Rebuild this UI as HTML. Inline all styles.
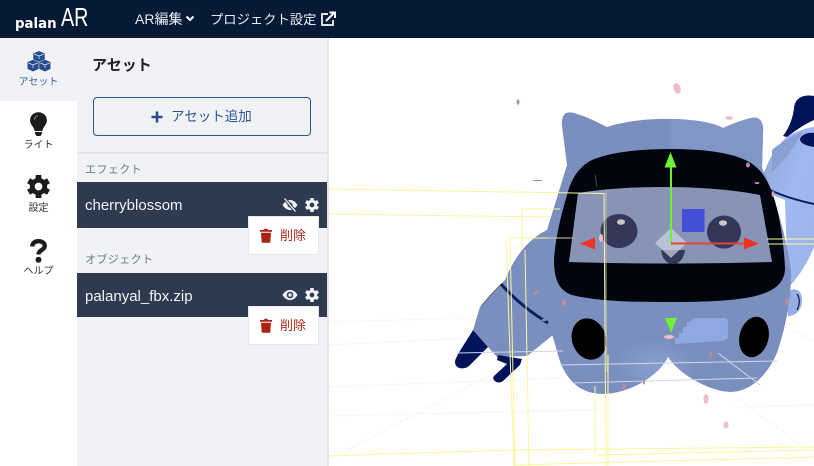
<!DOCTYPE html>
<html lang="ja"><head><meta charset="utf-8"><style>
*{box-sizing:border-box;margin:0;padding:0}
html,body{width:814px;height:466px;overflow:hidden;background:#fff;font-family:"Liberation Sans","Noto Sans CJK JP",sans-serif}
.a{position:absolute;white-space:nowrap}
.hd{left:0;top:0;width:814px;height:38px;background:#061a36}
.lb{left:0;width:77px;text-align:center;font-size:10px;line-height:12px;color:#333}
.row{left:77px;width:250px;background:#2d3a50}
.pop{left:248px;width:71px;height:39px;background:#fff;border:1px solid #e8e9ec;color:#b02a1e;font-size:13px;line-height:38px;padding-left:31px}
.sec{left:85px;font-size:11px;line-height:14px;color:#74787f;letter-spacing:.4px}
.nm{left:85px;font-size:15px;line-height:18px;color:#f2f4f7}
</style></head><body>
<svg class="a" style="left:328px;top:38px" width="486" height="428" viewBox="328 38 486 428">
<defs>
<radialGradient id="gl" cx="50%" cy="50%" r="50%"><stop offset="0" stop-color="#9cb6ee" stop-opacity=".4"/><stop offset="1" stop-color="#9cb6ee" stop-opacity="0"/></radialGradient>
<linearGradient id="rc" x1="0" y1="0" x2="1" y2="1"><stop offset="0" stop-color="#8ea4d8"/><stop offset=".5" stop-color="#a0b9ef"/><stop offset="1" stop-color="#9ab3ea"/></linearGradient>
</defs>
<g stroke="#f5f6f7" stroke-width="1" fill="none">
<path d="M328 322 L470 318M328 345 L470 338M328 387 L560 378M328 416 L814 405M328 460 L500 370M730 392 L814 455M790 330 L814 340"/>
</g>
<!-- right cat -->
<path d="M760 190 C763 170 772 150 787 137 C797 131 806 128 814 127 L814 247 C808 262 798 278 788 288 L785 200Z" fill="url(#rc)"/>
<path d="M772 150 C782 141 795 135 803 132 L786 158 L772 172Z" fill="#8a9fd4"/>
<path d="M783 136 C789 128 793 118 794 108 C795 98 803 94 814 96 L814 120 C805 124 796 130 787 137Z" fill="#03135a"/>
<path d="M800 139 C801 135 808 132 814 133 L814 147 C808 146 800 144 800 139Z" fill="#03135a"/>
<path d="M770 190 C785 197 800 201 814 204" stroke="#0b1d63" stroke-width="2" fill="none"/>
<path d="M786 292 C796 286 802 291 802 300 C802 310 796 316 788 316Z" fill="#97aee4"/>
<path d="M797 294 C800 298 800 304 797 310" stroke="#0b1d63" stroke-width="1.300" fill="none"/>
<!-- arm -->
<path d="M547 230 C530 238 515 255 505 280 L490 295 L480 307 L473 330 L497 357 L527 356 L553 335 L570 260Z" fill="#7b8fbe"/>
<path d="M501 284 C515 300 530 312 548 323" stroke="#0b1d63" stroke-width="3" fill="none"/>
<path d="M501 284 L481 306" stroke="#555" stroke-width=".7" fill="none"/>
<path d="M473 330 L488 347 L469 366 C464 370 455 369 455 362 C455 357 466 342 473 330Z" fill="#03135a"/>
<path d="M498 355 L522 359 L520 365 L503 381 C498 385 491 380 494 376 L507 364 L497 360Z" fill="#03135a"/>
<!-- head/body -->
<path d="M562 126 C561 114 566 111 574 113 C585 116 597 122 607 127 C640 116 695 116 723 128 C732 124 742 120 751 118 C760 116 764 122 763 134 L762 168 C778 205 788 245 791 272 C791 300 786 325 778 350 C770 372 752 392 730 392 C712 392 680 376 668 357 C660 375 630 394 603 394 C580 394 565 380 558 355 C554 340 552 335 548 320 L540 240 L547 230 L567 165Z" fill="#7b8fbe"/>
<path d="M670 119 C695 119 715 123 723 128 C732 124 742 120 751 118 C760 116 764 122 763 134 L762 168 C775 200 785 235 791 272 L670 150Z" fill="#8196c6"/>
<ellipse cx="655" cy="365" rx="42" ry="26" fill="url(#gl)"/>
<path d="M668 357 C660 375 630 394 603 394 L603 420 H735 L730 392 C712 392 680 376 668 357Z" fill="#fff"/>
<!-- visor -->
<path d="M670 149 C640 149 610 152 592 160 C578 167 571 180 567 195 C561 215 555 240 554 260 C554 278 558 290 572 295 C600 302 640 302 670 302 C705 302 745 301 765 293 C778 288 785 280 785 268 C784 245 780 215 773 195 C767 177 758 165 743 159 C725 151 695 149 670 149Z" fill="#01050e"/>
<path d="M578 193 C610 188 640 187 665 187 C700 187 735 190 760 195 L772 262 C710 264 630 264 569 262Z" fill="#8794b5"/>
<!-- eyes -->
<ellipse cx="619" cy="231" rx="18.500" ry="17" fill="#33375a"/>
<ellipse cx="621" cy="222" rx="4" ry="2.800" fill="#c9c9c3"/>
<ellipse cx="724" cy="232" rx="17" ry="16.500" fill="#33375a"/>
<ellipse cx="723" cy="223" rx="4" ry="2.800" fill="#c9c9c3"/>
<path d="M661 250 H685 C684 259 679 264 673 264 C667 264 662 259 661 250Z" fill="#33375a"/>
<path d="M662 250 L679 250 L671 258Z" fill="#5f6a8c"/>
<!-- nose patch & ovals -->
<path d="M675 344 V338 H679 V333 H683 V327 H687 V322 H690 C692 319 695 318 698 318 H724 C727 318 728 320 728 323 V335 C728 339 726 340 722 341Z" fill="#8ea8e2"/>
<ellipse cx="589" cy="339" rx="17" ry="21" transform="rotate(-18 589 339)" fill="#000"/>
<ellipse cx="754" cy="337" rx="14.500" ry="20.500" transform="rotate(14 754 337)" fill="#000"/>
<!-- yellow boxes -->
<g fill="none" stroke="#faf79c" stroke-width="1">
<path d="M328 189 L604 193.500 L606 466"/>
<path d="M328 214 L550 217 M522 209 V250 M522 209 H560"/>
<path d="M508 238 H570 M510 238 L515 466 M506 240 L514 466"/>
<path d="M328 456 L513 450 L814 447 M515 465 L814 457 M595 386 V455 L814 450"/>
<path d="M525 250 L529 466 M608 355 V466"/>
<path d="M767 239 H814M768 244 H814"/>
</g>
<g stroke="#c8cbb0" stroke-width="1" fill="none" opacity=".8">
<path d="M606 190 V300M606 300 L607 372"/>
<path d="M548 238 H575"/>
</g>
<g stroke="#cfd6e6" stroke-width="1" fill="none">
<path d="M560 365 L777 361 M573 383 L757 378 M718 353 L760 385 M457 353 L563 351"/>
</g>
<!-- petals -->
<g fill="#f0bcc9">
<ellipse cx="677" cy="88.500" rx="3.500" ry="5.500" transform="rotate(-15 677 88)"/>
<ellipse cx="729" cy="118" rx="4" ry="1.800"/>
<ellipse cx="706" cy="399" rx="2.500" ry="5"/>
<ellipse cx="726" cy="425" rx="2.500" ry="3.500"/>
<ellipse cx="669" cy="337" rx="5" ry="2"/>
<ellipse cx="601" cy="238" rx="2" ry="4"/>
</g>
<g fill="#c08a9c">
<ellipse cx="518" cy="102" rx="1.500" ry="2.800"/>
<ellipse cx="624" cy="386" rx="1.500" ry="2.800"/>
<ellipse cx="564" cy="303" rx="2" ry="3.500"/>
<ellipse cx="536" cy="293" rx="3" ry="1.500" transform="rotate(-20 536 293)"/>
<ellipse cx="544" cy="320" rx="2.500" ry="1"/>
<ellipse cx="644" cy="382" rx="1" ry="2.500"/>
<ellipse cx="711" cy="354" rx="1" ry="2.500"/>
<ellipse cx="787" cy="302" rx="2" ry="3.500"/>
<ellipse cx="748" cy="165" rx="2" ry="2.500"/>
<ellipse cx="757" cy="183" rx="2.500" ry="1"/>
<ellipse cx="773" cy="194" rx="1.500" ry="3" fill="#d69aa4"/>
</g>
<path d="M533 180.500 H542" stroke="#b48a9a" stroke-width="1"/>
<path d="M595 175 L597 187" stroke="#555" stroke-width=".8"/>
<!-- gizmo -->
<path d="M671 228 L687 243 L671 258 L655 243Z" fill="#fff" fill-opacity=".42"/>
<path d="M671 243 V165" stroke="#6fef35" stroke-width="2"/>
<path d="M670.500 152 L676.500 167.500 H664.500Z" fill="#6df037"/>
<path d="M671 243.500 H745" stroke="#ea4038" stroke-width="2"/>
<path d="M759 243.500 L744 237.500 V249.500Z" fill="#ee3424"/>
<path d="M580 243.500 L595 237.500 V249.500Z" fill="#ee3424"/>
<rect x="682" y="209" width="22.500" height="23" fill="#444ed8"/>
<path d="M665 318 H677 L671 333Z" fill="#6df037"/>
</svg>

<div class="a" style="left:77px;top:38px;width:250px;height:428px;background:#f0f2f5"></div>
<div class="a" style="left:327px;top:38px;width:1.500px;height:428px;background:#e3e5e8"></div>
<div class="a" style="left:0;top:38px;width:77px;height:63px;background:#f0f2f5"></div>

<div class="a hd"></div>
<div class="a" style="left:15px;top:14px;font:bold 14.500px/20px 'DejaVu Sans',sans-serif;color:#fff;transform-origin:0 50%;transform:scaleX(.92)">palan</div>
<div class="a" style="left:61px;top:2px;font-size:26px;line-height:30px;color:#fff;transform-origin:0 50%;transform:scaleX(.76)">AR</div>
<div class="a" style="left:135px;top:10px;font-size:14px;line-height:19px;color:#e9edf3">AR編集</div>
<svg class="a" style="left:185px;top:15px" width="10" height="8" viewBox="0 0 10 8"><path d="M1.500 1.500 L5 5 L8.500 1.500" stroke="#fff" stroke-width="2" fill="none"/></svg>
<div class="a" style="left:210px;top:10px;font-size:13.300px;line-height:19px;color:#e9edf3">プロジェクト設定</div>
<svg class="a" style="left:320px;top:11px" width="17" height="16" viewBox="0 0 17 16"><path d="M8 3 H2 V14 H13 V9" stroke="#fff" stroke-width="1.700" fill="none"/><path d="M6 10 L14 2 M9.500 1.500 H15 V7" stroke="#fff" stroke-width="2" fill="none"/></svg>

<!-- rail -->
<svg class="a" style="left:27px;top:50px" width="24" height="22" viewBox="0 0 24 22">
<g fill="#264a90" stroke="#f0f2f5" stroke-width=".5">
<path d="M12 .8 L18 3.300 V10 L12 12.500 L6 10 V3.300Z"/>
<path d="M6 9.500 L12 12 V19 L6 21.700 L0.300 19 V12Z"/>
<path d="M18 9.500 L23.700 12 V19 L18 21.700 L12 19 V12Z"/>
</g>
<g stroke="#f0f2f5" stroke-width=".7" fill="none"><path d="M7 4 L12 6 L17 4M12 6 V9M1.500 13 L6 15 L10.500 13M6 15 V18M13.500 13 L18 15 L22.500 13M18 15 V18"/></g>
</svg>
<div class="a lb" style="top:75px;color:#3f62a3;transform:translateY(2px)">アセット</div>
<svg class="a" style="left:30px;top:112px" width="17" height="25" viewBox="0 0 17 25"><path d="M8.500 0.300 C3.500 0.300 0.100 3.800 0.100 8.300 C0.100 13 3.800 14.500 4.700 19 H12.300 C13.200 14.500 16.900 13 16.900 8.300 C16.900 3.800 13.500 .3 8.500 .3Z" fill="#1c1c1c"/><path d="M4.500 8 C4.500 5.500 6 4 8 4" stroke="#fff" stroke-width="1" fill="none" opacity=".5"/><path d="M5 20 H12 V21.500 L10.500 24 H6.500 L5 21.500Z" fill="#1c1c1c"/></svg>
<div class="a lb" style="top:140px">ライト</div>
<svg class="a" style="left:27px;top:175px" width="23" height="23" viewBox="-12 -12 24 24"><g fill="#1c1c1c"><path d="M-3 -12 H3 V-6 H-3Z"/><path d="M-3 -12 H3 V-6 H-3Z" transform="rotate(60)"/><path d="M-3 -12 H3 V-6 H-3Z" transform="rotate(120)"/><path d="M-3 -12 H3 V-6 H-3Z" transform="rotate(180)"/><path d="M-3 -12 H3 V-6 H-3Z" transform="rotate(240)"/><path d="M-3 -12 H3 V-6 H-3Z" transform="rotate(300)"/></g><circle r="6.500" fill="none" stroke="#1c1c1c" stroke-width="5"/></svg>
<div class="a lb" style="top:203px">設定</div>
<svg class="a" style="left:30px;top:239px" width="17" height="24" viewBox="0 0 17 24"><path d="M2.200 7.500 C2.500 3.800 5 2.200 8.500 2.200 C12 2.200 14.800 4 14.800 7 C14.800 11 8.500 11 8.500 15.500" stroke="#1c1c1c" stroke-width="4.300" fill="none"/><circle cx="8.500" cy="20.800" r="3" fill="#1c1c1c"/></svg>
<div class="a lb" style="top:266px">ヘルプ</div>

<!-- panel -->
<div class="a" style="left:92px;top:56px;font-size:15px;line-height:20px;font-weight:bold;color:#222">アセット</div>
<div class="a" style="left:93px;top:97px;width:218px;height:39px;border:1px solid #2f5596;border-radius:4px"></div>
<svg class="a" style="left:151px;top:110.500px" width="12" height="12" viewBox="0 0 12 12"><path d="M6 .5 V11.500M.5 6 H11.500" stroke="#2a4d8f" stroke-width="2.600"/></svg>
<div class="a" style="left:171px;top:107px;font-size:13.500px;line-height:19px;color:#2f5596">アセット追加</div>
<div class="a" style="left:77px;top:152px;width:250px;height:2px;background:#e3e5e8"></div>
<div class="a sec" style="top:163px">エフェクト</div>
<div class="a row" style="top:182px;height:46px"></div>
<div class="a nm" style="top:197px">cherryblossom</div>
<div class="a sec" style="top:253px">オブジェクト</div>
<div class="a row" style="top:273px;height:44px"></div>
<div class="a nm" style="top:288px">palanyal_fbx.zip</div>

<svg class="a" style="left:282px;top:197px" width="16" height="16" viewBox="0 0 16 16"><path d="M.5 8 C3 4.200 5.500 3 8 3 C10.500 3 13 4.200 15.500 8 C13 11.800 10.500 13 8 13 C5.500 13 3 11.800 .5 8Z" fill="#f2f4f7"/><circle cx="8" cy="8" r="2.500" fill="#2d3a50"/><path d="M2.500 1.500 L13.500 14.500" stroke="#2d3a50" stroke-width="3.200"/><path d="M2.500 1.500 L13.500 14.500" stroke="#f2f4f7" stroke-width="1.300"/></svg>
<svg class="a" style="left:305px;top:198px" width="14" height="14" viewBox="-12 -12 24 24"><g fill="#f2f4f7"><path d="M-3 -12 H3 V-6 H-3Z"/><path d="M-3 -12 H3 V-6 H-3Z" transform="rotate(60)"/><path d="M-3 -12 H3 V-6 H-3Z" transform="rotate(120)"/><path d="M-3 -12 H3 V-6 H-3Z" transform="rotate(180)"/><path d="M-3 -12 H3 V-6 H-3Z" transform="rotate(240)"/><path d="M-3 -12 H3 V-6 H-3Z" transform="rotate(300)"/></g><circle r="6.500" fill="none" stroke="#f2f4f7" stroke-width="5"/></svg>
<svg class="a" style="left:282px;top:288px" width="16" height="14" viewBox="0 0 16 14"><path d="M.5 7 C3 3 5.500 2 8 2 C10.500 2 13 3 15.500 7 C13 11 10.500 12 8 12 C5.500 12 3 11 .5 7Z" fill="#f2f4f7"/><circle cx="8" cy="7" r="3.300" fill="#2d3a50"/><circle cx="8" cy="7" r="1.700" fill="#f2f4f7"/></svg>
<svg class="a" style="left:305px;top:288px" width="14" height="14" viewBox="-12 -12 24 24"><g fill="#f2f4f7"><path d="M-3 -12 H3 V-6 H-3Z"/><path d="M-3 -12 H3 V-6 H-3Z" transform="rotate(60)"/><path d="M-3 -12 H3 V-6 H-3Z" transform="rotate(120)"/><path d="M-3 -12 H3 V-6 H-3Z" transform="rotate(180)"/><path d="M-3 -12 H3 V-6 H-3Z" transform="rotate(240)"/><path d="M-3 -12 H3 V-6 H-3Z" transform="rotate(300)"/></g><circle r="6.500" fill="none" stroke="#f2f4f7" stroke-width="5"/></svg>

<div class="a pop" style="top:216px">削除</div>
<svg class="a" style="left:259px;top:228px" width="14" height="15" viewBox="0 0 14 15"><path d="M1 2 H5 L5.500 .8 H8.500 L9 2 H13 V3.800 H1Z M2 4.800 H12 L11.300 14 C11.300 14.500 11 14.800 10.500 14.800 H3.500 C3 14.800 2.700 14.500 2.700 14Z" fill="#ad2014"/></svg>
<div class="a pop" style="top:306px">削除</div>
<svg class="a" style="left:259px;top:318px" width="14" height="15" viewBox="0 0 14 15"><path d="M1 2 H5 L5.500 .8 H8.500 L9 2 H13 V3.800 H1Z M2 4.800 H12 L11.300 14 C11.300 14.500 11 14.800 10.500 14.800 H3.500 C3 14.800 2.700 14.500 2.700 14Z" fill="#ad2014"/></svg>
</body></html>
